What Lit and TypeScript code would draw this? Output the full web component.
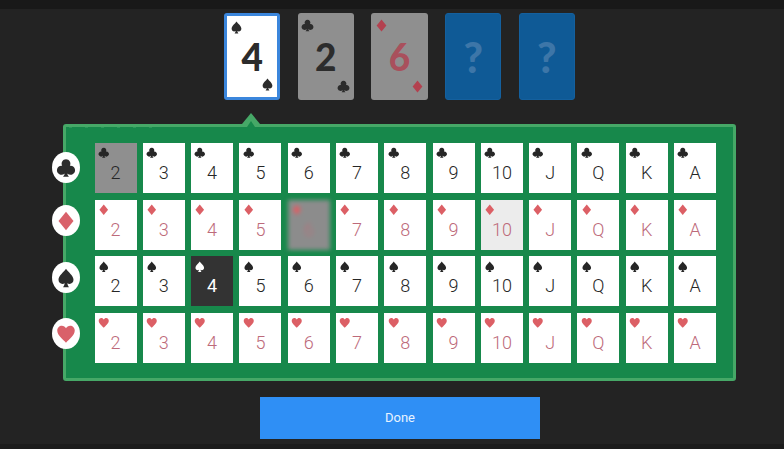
import { LitElement, html, css, svg } from "lit";
import { customElement } from "lit/decorators.js";
import { classMap } from "lit/directives/class-map.js";

type Suit = "club" | "diamond" | "spade" | "heart";

const PATHS: Record<Suit, ReturnType<typeof svg>> = {
  club: svg`<path d="M12 1.5a5.300 5.300 0 0 0-4.600 7.900 5.400 5.400 0 1 0 3 9.100c-.2 1.600-.8 2.700-2 4h7.200c-1.200-1.300-1.800-2.400-2-4a5.400 5.400 0 1 0 3-9.100A5.300 5.300 0 0 0 12 1.500z"/>`,
  diamond: svg`<path d="M12 1 21 12 12 23 3 12z"/>`,
  spade: svg`<path d="M12 1C9.500 5 3 9 3 14.200c0 3 2.200 5 4.800 5 1 0 1.900-.3 2.700-.9-.3 1.700-.9 3-2 4.700h7c-1.100-1.700-1.700-3-2-4.700.8.600 1.700.9 2.700.9 2.600 0 4.800-2 4.800-5C21 9 14.500 5 12 1z"/>`,
  heart: svg`<path d="M12 22.500C8 18 1.500 13.500 1.500 7.800 1.500 4.500 4 2 7 2c2.200 0 4 1.200 5 3.200C13 3.200 14.800 2 17 2c3 0 5.500 2.500 5.500 5.800C22.500 13.500 16 18 12 22.500z"/>`,
};

const icon = (s: Suit, cls = "") =>
  html`<svg class="suit ${cls}" viewBox="0 0 24 24" fill="currentColor">${PATHS[s]}</svg>`;

const RANKS = ["2", "3", "4", "5", "6", "7", "8", "9", "10", "J", "Q", "K", "A"];
const SUITS: Suit[] = ["club", "diamond", "spade", "heart"];
const BADGE_TOPS = [25, 78, 135, 191];
const STATES: Record<string, string> = {
  "club-2": "used",
  "diamond-6": "blurred",
  "spade-4": "picked",
  "diamond-10": "hover",
};
const isRed = (s: Suit) => s === "diamond" || s === "heart";

@customElement("app-root")
export class AppRoot extends LitElement {
  static styles = css`
    :host {
      display: block;
      width: 784px;
      height: 449px;
      overflow: hidden;
      background: #232323;
      font-family: "Lato", "Liberation Sans", sans-serif;
    }
    .page {
      width: 800px;
      height: 449px;
      box-sizing: border-box;
      border-top: 9px solid #191919;
      border-bottom: 5px solid #1c1c1c;
      display: flex;
      flex-direction: column;
      align-items: center;
    }
    .hand {
      display: flex;
      gap: 17.5px;
      margin: 4px 1px 0 0;
      height: 87px;
    }
    .big {
      position: relative;
      width: 56.2px;
      height: 87px;
      box-sizing: border-box;
      border-radius: 3px;
      display: flex;
      align-items: center;
      justify-content: center;
      font-size: 37px;
      font-weight: 900;
      color: #2c2c2c;
      background: #8f8f8f;
    }
    .big.active {
      background: #fff;
      border: 3px solid #3b86dc;
    }
    .big.red {
      color: #a9505c;
    }
    .big.red .suit {
      color: #b3414f;
    }
    .big.unknown {
      background: #0f5a96;
      color: #3d76a8;
      border: 1px solid #14609e;
      font-size: 42px;
    }
    .big .suit {
      position: absolute;
      width: 13px;
      height: 13px;
    }
    .big .tl {
      left: 3.500px;
      top: 5.500px;
    }
    .big .br {
      right: 4px;
      bottom: 7px;
    }
    .big.active .tl {
      left: 2.500px;
      top: 5px;
    }
    .big.active .br {
      right: 3px;
      bottom: 6px;
    }
    .panel {
      position: relative;
      margin: 24px 1px 0 0;
      width: 673px;
      height: 257px;
      box-sizing: border-box;
      background: #17884b;
      border: 3px solid #46a867;
      border-radius: 3px;
      padding: 16px 0 0 28.500px;
    }
    .panel::before {
      content: "";
      position: absolute;
      left: 176px;
      top: -14px;
      width: 0;
      height: 0;
      border-left: 9px solid transparent;
      border-right: 9px solid transparent;
      border-bottom: 11px solid #46a867;
    }
    .panel::after {
      content: "";
      position: absolute;
      left: 181px;
      top: -6px;
      width: 0;
      height: 0;
      border-left: 4px solid transparent;
      border-right: 4px solid transparent;
      border-bottom: 6px solid #17884b;
    }
    .marks {
      position: absolute;
      left: 3px;
      top: 0;
      width: 86px;
      height: 1px;
      background: repeating-linear-gradient(
        90deg,
        #2a9a5a 0 3px,
        #17884b 3px 16px
      );
    }
    .grid {
      display: grid;
      grid-template-columns: repeat(13, 42px);
      grid-auto-rows: 50px;
      column-gap: 6.300px;
      row-gap: 6.670px;
    }
    .card {
      position: relative;
      background: #fff;
      color: #262626;
      font-family: "Roboto", "Liberation Sans", sans-serif;
      font-size: 18px;
      font-weight: 300;
      display: flex;
      align-items: center;
      justify-content: center;
      padding-top: 9px;
      box-sizing: border-box;
    }
    .card .suit {
      position: absolute;
      left: 3.250px;
      top: 4.250px;
      width: 11.500px;
      height: 11.500px;
    }
    .card.red {
      color: #bd6a7a;
    }
    .card.red .suit {
      color: #dc5f65;
    }
    .card.used {
      background: #8f8f8f;
    }
    .card.hover {
      background: #ececec;
    }
    .card.picked {
      background: #333333;
      color: #fff;
      font-weight: 400;
    }
    .card.blurred {
      background: #8c8c8c;
      color: #b8717b;
      filter: blur(2px);
    }
    .badge {
      position: absolute;
      left: -14px;
      width: 28px;
      height: 31px;
      border-radius: 50%;
      background: #fff;
      color: #2c2c2c;
      display: flex;
      align-items: center;
      justify-content: center;
    }
    .badge.red {
      color: #d9616a;
    }
    .badge .suit {
      width: 20px;
      height: 20px;
    }
    .done {
      margin-top: 16px;
      width: 280px;
      height: 42px;
      border: none;
      background: #2f8ff5;
      color: #e8f3ff;
      font-family: "Roboto", "Liberation Sans", sans-serif;
      font-size: 13px;
      padding: 0 0 1px;
    }
  `;

  render() {
    const hand = [
      { s: "spade" as Suit, r: "4", active: true },
      { s: "club" as Suit, r: "2" },
      { s: "diamond" as Suit, r: "6" },
    ];
    return html`<div class="page">
      <div class="hand">
        ${hand.map(
          (c) => html`<div class=${classMap({ big: true, active: !!c.active, red: isRed(c.s) })}>
            ${icon(c.s, "tl")}${c.r}${icon(c.s, "br")}
          </div>`
        )}
        <div class="big unknown">?</div>
        <div class="big unknown">?</div>
      </div>
      <div class="panel">
        <div class="marks"></div>
        ${SUITS.map(
          (s, i) => html`<div
            class=${classMap({ badge: true, red: isRed(s) })}
            style="top:${BADGE_TOPS[i]}px"
          >
            ${icon(s)}
          </div>`
        )}
        <div class="grid">
          ${SUITS.flatMap((s) =>
            RANKS.map(
              (r) => html`<div
                class="card ${isRed(s) ? "red" : ""} ${STATES[`${s}-${r}`] ?? ""}"
              >
                ${icon(s)}${r}
              </div>`
            )
          )}
        </div>
      </div>
      <button class="done">Done</button>
    </div>`;
  }
}
